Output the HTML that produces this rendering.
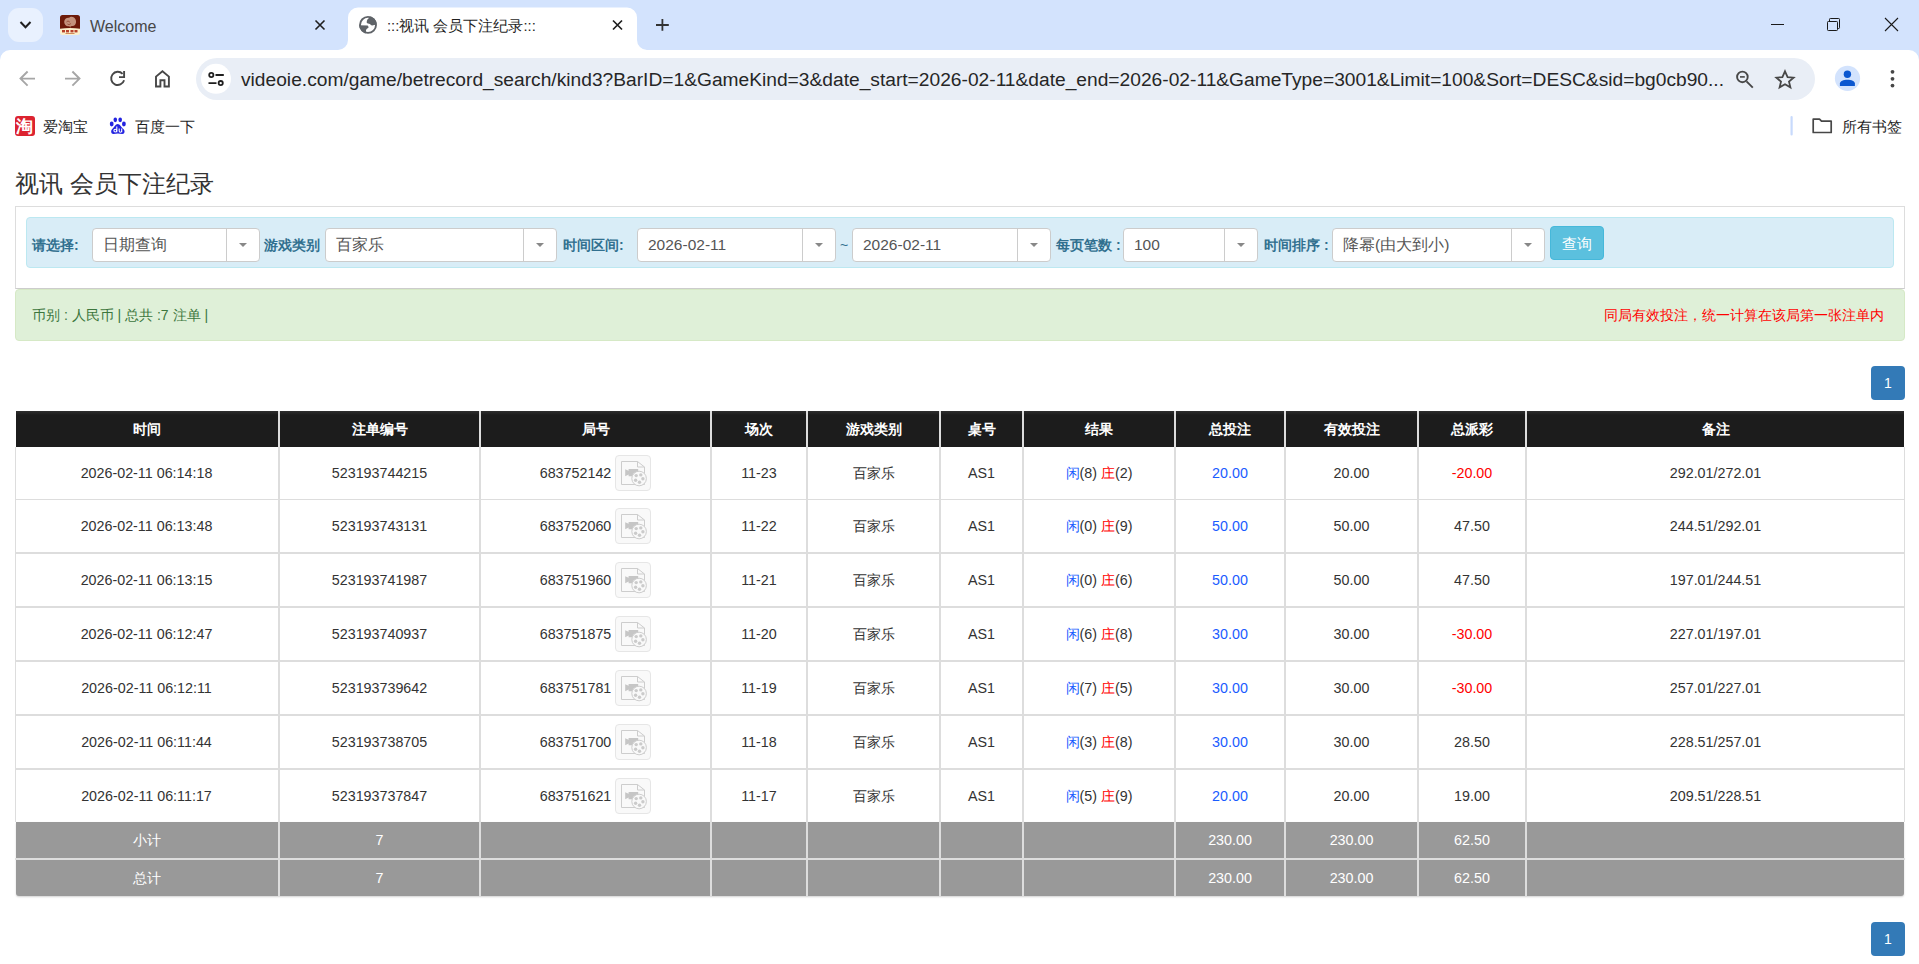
<!DOCTYPE html>
<html><head><meta charset="utf-8">
<style>
*{box-sizing:border-box}
html,body{margin:0;padding:0;width:1919px;height:964px;overflow:hidden;background:#fff;font-family:"Liberation Sans",sans-serif;color:#333}
.abs{position:absolute}
#tabstrip{position:absolute;left:0;top:0;width:1919px;height:50px;background:#d3e3fd}
#toolbar{position:absolute;left:0;top:50px;width:1919px;height:56px;background:#fff;border-radius:10px 10px 0 0}
#omni{position:absolute;left:196px;top:58px;width:1619px;height:42px;background:#e9eef6;border-radius:21px}
#bookmarks{position:absolute;left:0;top:106px;width:1919px;height:40px;background:#fff}
#page{position:absolute;left:0;top:146px;width:1919px;height:818px;background:#fff}
.title{position:absolute;left:15px;top:22.5px;font-size:24.2px;line-height:30px;color:#333;white-space:nowrap}
.panel{position:absolute;left:15px;top:60px;width:1890px;height:83px;border:1px solid #ddd;border-bottom-color:#ccc}
.ainfo{position:absolute;left:26px;top:71px;width:1868px;height:51px;background:#d9edf7;border:1px solid #bce8f1;border-radius:4px}
.lbl{position:absolute;top:90px;font-size:14px;font-weight:bold;color:#31708f;line-height:18px;white-space:nowrap}
.sel{position:absolute;top:82px;height:34px;background:#fff;border:1px solid #ccc;border-radius:4px}
.sel .t{position:absolute;left:10px;top:6.5px;font-size:15.5px;line-height:18px;color:#555;white-space:nowrap}
.sel .d{position:absolute;top:0;bottom:0;right:32px;width:1px;background:#ccc}
.sel .c{position:absolute;top:14px;right:12px;width:0;height:0;border-left:4px solid transparent;border-right:4px solid transparent;border-top:4px solid #888}
.btn{position:absolute;left:1550px;top:80px;width:54px;height:34px;background:#5bc0de;border:1px solid #46b8da;border-radius:4px;color:#fff;font-size:15.4px;line-height:34px;text-align:center}
.asucc{position:absolute;left:15px;top:143px;width:1890px;height:52px;background:#dff0d8;border:1px solid #d6e9c6;border-radius:4px;color:#3c763d;font-size:14px}
.asucc .l{position:absolute;left:16px;top:16px;line-height:18px;white-space:nowrap}
.asucc .r{position:absolute;right:20px;top:16px;line-height:18px;white-space:nowrap;color:#f00}
.pg{position:absolute;left:1871px;width:34px;height:34px;background:#337ab7;border-radius:4px;color:#fff;font-size:14px;line-height:34px;text-align:center}
.thead{position:absolute;background:linear-gradient(#2e2e2e,#1c1c1c 4px)}
.tfoot{position:absolute;background:#999;border-radius:0 0 3px 3px;box-shadow:0 1px 2px rgba(0,0,0,.18)}
.vl,.hl{position:absolute;background:#ddd}
.cell{position:absolute;display:flex;align-items:center;justify-content:center;font-size:14.3px;white-space:nowrap;color:#333}
.cell.th{color:#fff;font-weight:bold;padding-top:1px}
.cell.tf{color:#fff}
.vid{display:inline-block;vertical-align:middle;width:36px;height:36px;margin-left:4px;border:1px solid #e6e6e6;border-radius:4px;background:#f9f9f9;position:relative}
.vid svg{position:absolute;left:-1px;top:-1px}
.blue{color:#1a5cff}.red{color:#f00}
.ui{font-family:"Liberation Sans",sans-serif}

</style></head><body>
<svg class="abs" style="left:0;top:0" width="1919" height="146" viewBox="0 0 1919 146">
  <rect x="0" y="0" width="1919" height="146" fill="#fff"/>
  <rect x="0" y="0" width="1919" height="50" fill="#d3e3fd"/>
  <!-- toolbar rounded top corners -->
  <path d="M0 50H1919V60A10 10 0 0 0 1909 50H10A10 10 0 0 0 0 60Z" fill="#d3e3fd"/>
  <!-- active tab -->
  <path d="M338 50A10 10 0 0 0 348 40V17.5A10 10 0 0 1 358 7.5H627A10 10 0 0 1 637 17.5V40A10 10 0 0 0 647 50Z" fill="#fff"/>
  <!-- tab search btn -->
  <rect x="8" y="8" width="35" height="34" rx="11" fill="#e9f1fe"/>
  <path d="M20.5 22L25.5 27.2L30.5 22" fill="none" stroke="#1f1f1f" stroke-width="2"/>
  <!-- welcome favicon -->
  <path d="M60 29.5V17.5A2.5 2.5 0 0 1 62.5 15H77.5A2.5 2.5 0 0 1 80 17.5V29.5Z" fill="#6c1a09"/>
  <path d="M60 28.8Q70 27.2 80 28.8V32.5A2.5 2.5 0 0 1 77.5 35H62.5A2.5 2.5 0 0 1 60 32.5Z" fill="#fbf0cc"/>
  <path d="M64.2 21.5C64.5 19 66.5 17.5 69 17.8C70 16.5 72.5 16.2 74 17.5C75.5 18.5 76.3 20.5 76 22.5C75.8 24.5 74.5 25.8 72.5 26C71.5 26.2 70.8 26 70.5 26.5L70.3 28L69.5 26.3C68 26.5 66.2 26 65.2 24.8C64.5 23.8 64.1 22.7 64.2 21.5Z" fill="#e9c6ae" opacity="0.7"/>
  <path d="M66.5 22C67.5 20.8 69 21 69.8 22.2M67.5 24C68.5 24.8 70 24.6 70.8 23.5" fill="none" stroke="#8a3a22" stroke-width="0.8"/>
  <g fill="#b8412a"><rect x="62" y="30" width="3" height="2.4"/><rect x="66" y="30" width="3" height="2.4"/><rect x="70.5" y="30" width="3" height="2.4"/><rect x="74.5" y="30" width="3" height="2.4"/></g>
  <rect x="65.5" y="33" width="9" height="1" fill="#d08a5a"/>
  <!-- inactive tab close -->
  <path d="M315.5 20.5L324.5 29.5M324.5 20.5L315.5 29.5" stroke="#1f1f1f" stroke-width="1.6"/>
  <!-- globe -->
  <clipPath id="gclip"><circle cx="368" cy="24.9" r="8.8"/></clipPath>
  <circle cx="368" cy="24.9" r="8" fill="none" stroke="#5f6368" stroke-width="1.9"/>
  <g clip-path="url(#gclip)" fill="#5f6368">
    <path d="M369.5 15V17.8C367.3 18.8 366.3 21.3 366.9 23C368.2 23.9 370.2 23.6 371.1 25.3C372.6 25.7 374.8 25.2 378 24V15Z"/>
    <path d="M358 25.1L367.4 25.6C368.6 26.2 368.7 27.6 368.2 27.9C366.6 28.6 366 29.4 366 31L365.8 35H358Z"/>
  </g>
  <!-- active tab close -->
  <path d="M613 20.5L622 29.5M622 20.5L613 29.5" stroke="#1f1f1f" stroke-width="1.7"/>
  <!-- new tab + -->
  <path d="M662.4 19V30.8M656 25H668.8" stroke="#333" stroke-width="1.8"/>
  <!-- window controls -->
  <path d="M1771 24.5H1784" stroke="#1a1a1a" stroke-width="1"/>
  <rect x="1827.5" y="21.5" width="10" height="9" rx="0.8" fill="none" stroke="#1a1a1a" stroke-width="1"/>
  <path d="M1829.5 21V19.3A0.8 0.8 0 0 1 1830.3 18.5H1838.7A0.8 0.8 0 0 1 1839.5 19.3V27.7A0.8 0.8 0 0 1 1838.7 28.5H1838" fill="none" stroke="#1a1a1a" stroke-width="1"/>
  <path d="M1885 18L1898 31M1898 18L1885 31" stroke="#1a1a1a" stroke-width="1.1"/>
  <!-- nav icons -->
  <path d="M35 78.6H21.5M27.6 71.5L20.5 78.6L27.6 85.7" fill="none" stroke="#a6a6a6" stroke-width="1.9"/>
  <path d="M65 78.6H78.5M72.4 71.5L79.5 78.6L72.4 85.7" fill="none" stroke="#a6a6a6" stroke-width="1.9"/>
  <path d="M124.1 80.3A6.6 6.6 0 1 1 122.6 73.9" fill="none" stroke="#474747" stroke-width="1.9"/>
  <path d="M119 77.1H124.1V71" fill="none" stroke="#474747" stroke-width="1.9"/>
  <path d="M156 86.5V76.6L162.45 71.2L168.9 76.6V86.5H164.5V80.3H160.4V86.5Z" fill="none" stroke="#474747" stroke-width="1.9" stroke-linejoin="miter"/>
  <!-- omnibox -->
  <rect x="196" y="58" width="1619" height="42" rx="21" fill="#e9eef6"/>
  <circle cx="216" cy="78.8" r="15" fill="#fff"/>
  <circle cx="211.3" cy="75" r="2.1" fill="none" stroke="#1f1f1f" stroke-width="1.8"/>
  <path d="M215.5 75H223.8M208.5 83.1H216.5" stroke="#1f1f1f" stroke-width="1.8"/>
  <circle cx="220.7" cy="83.1" r="2.1" fill="none" stroke="#1f1f1f" stroke-width="1.8"/>
  <!-- zoom icon -->
  <circle cx="1742.4" cy="76.9" r="5.3" fill="none" stroke="#474747" stroke-width="1.9"/>
  <path d="M1740 76.9H1744.8" stroke="#474747" stroke-width="1.6"/>
  <path d="M1746.5 81.3L1752.8 87.6" stroke="#474747" stroke-width="1.9"/>
  <!-- star -->
  <path d="M1785 71.3L1787.6 77.1L1793.6 77.6L1789 81.6L1790.4 87.4L1785 84.3L1779.6 87.4L1781 81.6L1776.4 77.6L1782.4 77.1Z" fill="none" stroke="#474747" stroke-width="1.8" stroke-linejoin="miter"/>
  <!-- avatar -->
  <circle cx="1847.5" cy="78.4" r="12.6" fill="#d3e3fd"/>
  <circle cx="1847.4" cy="74.3" r="3.7" fill="#0b57d0"/>
  <path d="M1839.9 85.9V83.6C1839.9 81 1843.5 79.7 1847.4 79.7C1851.3 79.7 1854.9 81 1854.9 83.6V85.9Z" fill="#0b57d0"/>
  <!-- menu dots -->
  <circle cx="1892.5" cy="71.8" r="1.9" fill="#474747"/>
  <circle cx="1892.5" cy="78.8" r="1.9" fill="#474747"/>
  <circle cx="1892.5" cy="85.6" r="1.9" fill="#474747"/>
  <!-- bookmarks -->
  <rect x="15" y="116" width="20" height="20" rx="3" fill="#dc2330"/>
  <text x="24.6" y="131.6" font-size="16.5" fill="#fff" text-anchor="middle" font-weight="bold">淘</text>
  <g fill="#2323e0">
    <ellipse cx="111.7" cy="124" rx="1.9" ry="2.4"/>
    <ellipse cx="115.3" cy="119.8" rx="1.8" ry="2.4"/>
    <ellipse cx="120.2" cy="119.8" rx="1.8" ry="2.4"/>
    <ellipse cx="123.9" cy="124" rx="1.9" ry="2.4"/>
    <path d="M117.7 124.1C115.5 124.1 114.5 127 112.5 128.8C110.5 130.6 110.8 134 113.5 134C115 134 116.5 133.4 117.9 133.4C119.3 133.4 120.8 134 122.3 134C125 134 125.3 130.6 123.1 128.8C121 127 120 124.1 117.7 124.1Z"/>
  </g>
  <g fill="none" stroke="#fff" stroke-width="1.1">
    <circle cx="115.3" cy="130.6" r="1.4"/>
    <path d="M116.8 126.6V132.3M119.2 128.4V131A1.25 1.25 0 0 0 121.7 131V128.4M121.7 131V132.3"/>
  </g>
  <rect x="1790.5" y="116" width="2.2" height="19.5" rx="1.1" fill="#c8dafc"/>
  <path d="M1813.2 119.2H1819.5L1821.5 121.2H1831.2V132.5H1813.2Z" fill="none" stroke="#474747" stroke-width="1.7" stroke-linejoin="round"/>
</svg>
<div class="abs ui" style="left:90px;top:18px;font-size:16px;line-height:18px;color:#474747;white-space:nowrap">Welcome</div>
<div class="abs ui" style="left:387px;top:17px;font-size:14.8px;line-height:18px;color:#1f1f1f;white-space:nowrap">:::视讯 会员下注纪录:::</div>
<div class="abs ui" id="url" style="left:241px;top:69px;font-size:19.2px;line-height:22px;color:#262626;white-space:nowrap">videoie.com/game/betrecord_search/kind3?BarID=1&amp;GameKind=3&amp;date_start=2026-02-11&amp;date_end=2026-02-11&amp;GameType=3001&amp;Limit=100&amp;Sort=DESC&amp;sid=bg0cb90...</div>
<div class="abs ui" style="left:42.5px;top:118px;font-size:15.4px;line-height:18px;color:#1f1f1f;white-space:nowrap">爱淘宝</div>
<div class="abs ui" style="left:135px;top:118px;font-size:15.4px;line-height:18px;color:#1f1f1f;white-space:nowrap">百度一下</div>
<div class="abs ui" style="left:1842px;top:118px;font-size:15.4px;line-height:18px;color:#1f1f1f;white-space:nowrap">所有书签</div>

<div id="page">
  <div class="title">视讯 会员下注纪录</div>
  <div class="panel"></div>
  <div class="ainfo"></div>
  <div class="lbl" style="left:32px">请选择:</div>
  <div class="sel" style="left:92px;width:168px"><span class="t">日期查询</span><i class="d"></i><i class="c"></i></div>
  <div class="lbl" style="left:264px">游戏类别</div>
  <div class="sel" style="left:325px;width:232px"><span class="t">百家乐</span><i class="d"></i><i class="c"></i></div>
  <div class="lbl" style="left:563px">时间区间:</div>
  <div class="sel" style="left:637px;width:199px"><span class="t">2026-02-11</span><i class="d"></i><i class="c"></i></div>
  <div class="lbl" style="left:840px;font-weight:normal">~</div>
  <div class="sel" style="left:852px;width:199px"><span class="t">2026-02-11</span><i class="d"></i><i class="c"></i></div>
  <div class="lbl" style="left:1056px">每页笔数 :</div>
  <div class="sel" style="left:1123px;width:135px"><span class="t">100</span><i class="d"></i><i class="c"></i></div>
  <div class="lbl" style="left:1264px">时间排序 :</div>
  <div class="sel" style="left:1332px;width:213px"><span class="t">降幂(由大到小)</span><i class="d"></i><i class="c"></i></div>
  <div class="btn">查询</div>
  <div class="asucc"><span class="l">币别 : 人民币 | 总共 :7 注单 |</span><span class="r">同局有效投注，统一计算在该局第一张注单内</span></div>
  <div class="pg" style="top:220px">1</div>
<div class="thead" style="left:16px;top:265px;width:1888px;height:36px"></div>
<div class="tfoot" style="left:16px;top:676px;width:1888px;height:74px"></div>
<div class="vl" style="left:15px;top:301px;width:1px;height:375px"></div>
<div class="vl" style="left:278px;top:265px;width:2px;height:485px"></div>
<div class="vl" style="left:479px;top:265px;width:2px;height:485px"></div>
<div class="vl" style="left:710px;top:265px;width:2px;height:485px"></div>
<div class="vl" style="left:806px;top:265px;width:2px;height:485px"></div>
<div class="vl" style="left:939px;top:265px;width:2px;height:485px"></div>
<div class="vl" style="left:1022px;top:265px;width:2px;height:485px"></div>
<div class="vl" style="left:1174px;top:265px;width:2px;height:485px"></div>
<div class="vl" style="left:1284px;top:265px;width:2px;height:485px"></div>
<div class="vl" style="left:1417px;top:265px;width:2px;height:485px"></div>
<div class="vl" style="left:1525px;top:265px;width:2px;height:485px"></div>
<div class="vl" style="left:1904px;top:301px;width:1px;height:375px"></div>
<div class="hl" style="left:15px;top:353px;width:1890px;height:1px"></div>
<div class="hl" style="left:15px;top:406px;width:1890px;height:2px"></div>
<div class="hl" style="left:15px;top:460px;width:1890px;height:2px"></div>
<div class="hl" style="left:15px;top:514px;width:1890px;height:2px"></div>
<div class="hl" style="left:15px;top:568px;width:1890px;height:2px"></div>
<div class="hl" style="left:15px;top:622px;width:1890px;height:2px"></div>
<div class="hl" style="left:15px;top:712px;width:1890px;height:2px"></div>
<div class="cell th" style="left:15px;top:265px;width:263px;height:36px"><span class="in">时间</span></div>
<div class="cell th" style="left:280px;top:265px;width:199px;height:36px"><span class="in">注单编号</span></div>
<div class="cell th" style="left:481px;top:265px;width:229px;height:36px"><span class="in">局号</span></div>
<div class="cell th" style="left:712px;top:265px;width:94px;height:36px"><span class="in">场次</span></div>
<div class="cell th" style="left:808px;top:265px;width:131px;height:36px"><span class="in">游戏类别</span></div>
<div class="cell th" style="left:941px;top:265px;width:81px;height:36px"><span class="in">桌号</span></div>
<div class="cell th" style="left:1024px;top:265px;width:150px;height:36px"><span class="in">结果</span></div>
<div class="cell th" style="left:1176px;top:265px;width:108px;height:36px"><span class="in">总投注</span></div>
<div class="cell th" style="left:1286px;top:265px;width:131px;height:36px"><span class="in">有效投注</span></div>
<div class="cell th" style="left:1419px;top:265px;width:106px;height:36px"><span class="in">总派彩</span></div>
<div class="cell th" style="left:1527px;top:265px;width:377px;height:36px"><span class="in">备注</span></div>
<div class="cell " style="left:15px;top:301px;width:263px;height:52px"><span class="in">2026-02-11 06:14:18</span></div>
<div class="cell " style="left:280px;top:301px;width:199px;height:52px"><span class="in">523193744215</span></div>
<div class="cell " style="left:481px;top:301px;width:229px;height:52px"><span class="in"><span style="position:relative;top:1px">683752142</span><span class="vid"><svg width="36" height="36" viewBox="0 0 36 36"><path d="M6.5 29.5V6.5H22.5L29.5 12V29.5Z" fill="#f9f9f9" stroke="#cdcdcd"/><path d="M22.5 6.5V12H29.5" fill="none" stroke="#cdcdcd"/><path d="M10.2 14.3L13.6 15.8V14H23.2V21.2H13.6V19.6L10.2 21.2Z" fill="#c6c6c6"/><circle cx="24.1" cy="23.5" r="7.3" fill="#f9f9f9" stroke="#cdcdcd"/><g fill="#cbcbcb"><circle cx="21.2" cy="20.6" r="1.7"/><circle cx="25.8" cy="19.9" r="1.7"/><circle cx="27.9" cy="23.7" r="1.7"/><circle cx="20.6" cy="25.3" r="1.7"/><circle cx="24.5" cy="27.2" r="1.7"/></g></svg></span></span></div>
<div class="cell " style="left:712px;top:301px;width:94px;height:52px"><span class="in">11-23</span></div>
<div class="cell " style="left:808px;top:301px;width:131px;height:52px"><span class="in">百家乐</span></div>
<div class="cell " style="left:941px;top:301px;width:81px;height:52px"><span class="in">AS1</span></div>
<div class="cell " style="left:1024px;top:301px;width:150px;height:52px"><span class="in"><span class="blue">闲</span>(8) <span class="red">庄</span>(2)</span></div>
<div class="cell " style="left:1176px;top:301px;width:108px;height:52px"><span class="in"><span class="blue">20.00</span></span></div>
<div class="cell " style="left:1286px;top:301px;width:131px;height:52px"><span class="in">20.00</span></div>
<div class="cell " style="left:1419px;top:301px;width:106px;height:52px"><span class="in"><span class="red">-20.00</span></span></div>
<div class="cell " style="left:1527px;top:301px;width:377px;height:52px"><span class="in">292.01/272.01</span></div>
<div class="cell " style="left:15px;top:354px;width:263px;height:52px"><span class="in">2026-02-11 06:13:48</span></div>
<div class="cell " style="left:280px;top:354px;width:199px;height:52px"><span class="in">523193743131</span></div>
<div class="cell " style="left:481px;top:354px;width:229px;height:52px"><span class="in"><span style="position:relative;top:1px">683752060</span><span class="vid"><svg width="36" height="36" viewBox="0 0 36 36"><path d="M6.5 29.5V6.5H22.5L29.5 12V29.5Z" fill="#f9f9f9" stroke="#cdcdcd"/><path d="M22.5 6.5V12H29.5" fill="none" stroke="#cdcdcd"/><path d="M10.2 14.3L13.6 15.8V14H23.2V21.2H13.6V19.6L10.2 21.2Z" fill="#c6c6c6"/><circle cx="24.1" cy="23.5" r="7.3" fill="#f9f9f9" stroke="#cdcdcd"/><g fill="#cbcbcb"><circle cx="21.2" cy="20.6" r="1.7"/><circle cx="25.8" cy="19.9" r="1.7"/><circle cx="27.9" cy="23.7" r="1.7"/><circle cx="20.6" cy="25.3" r="1.7"/><circle cx="24.5" cy="27.2" r="1.7"/></g></svg></span></span></div>
<div class="cell " style="left:712px;top:354px;width:94px;height:52px"><span class="in">11-22</span></div>
<div class="cell " style="left:808px;top:354px;width:131px;height:52px"><span class="in">百家乐</span></div>
<div class="cell " style="left:941px;top:354px;width:81px;height:52px"><span class="in">AS1</span></div>
<div class="cell " style="left:1024px;top:354px;width:150px;height:52px"><span class="in"><span class="blue">闲</span>(0) <span class="red">庄</span>(9)</span></div>
<div class="cell " style="left:1176px;top:354px;width:108px;height:52px"><span class="in"><span class="blue">50.00</span></span></div>
<div class="cell " style="left:1286px;top:354px;width:131px;height:52px"><span class="in">50.00</span></div>
<div class="cell " style="left:1419px;top:354px;width:106px;height:52px"><span class="in">47.50</span></div>
<div class="cell " style="left:1527px;top:354px;width:377px;height:52px"><span class="in">244.51/292.01</span></div>
<div class="cell " style="left:15px;top:408px;width:263px;height:52px"><span class="in">2026-02-11 06:13:15</span></div>
<div class="cell " style="left:280px;top:408px;width:199px;height:52px"><span class="in">523193741987</span></div>
<div class="cell " style="left:481px;top:408px;width:229px;height:52px"><span class="in"><span style="position:relative;top:1px">683751960</span><span class="vid"><svg width="36" height="36" viewBox="0 0 36 36"><path d="M6.5 29.5V6.5H22.5L29.5 12V29.5Z" fill="#f9f9f9" stroke="#cdcdcd"/><path d="M22.5 6.5V12H29.5" fill="none" stroke="#cdcdcd"/><path d="M10.2 14.3L13.6 15.8V14H23.2V21.2H13.6V19.6L10.2 21.2Z" fill="#c6c6c6"/><circle cx="24.1" cy="23.5" r="7.3" fill="#f9f9f9" stroke="#cdcdcd"/><g fill="#cbcbcb"><circle cx="21.2" cy="20.6" r="1.7"/><circle cx="25.8" cy="19.9" r="1.7"/><circle cx="27.9" cy="23.7" r="1.7"/><circle cx="20.6" cy="25.3" r="1.7"/><circle cx="24.5" cy="27.2" r="1.7"/></g></svg></span></span></div>
<div class="cell " style="left:712px;top:408px;width:94px;height:52px"><span class="in">11-21</span></div>
<div class="cell " style="left:808px;top:408px;width:131px;height:52px"><span class="in">百家乐</span></div>
<div class="cell " style="left:941px;top:408px;width:81px;height:52px"><span class="in">AS1</span></div>
<div class="cell " style="left:1024px;top:408px;width:150px;height:52px"><span class="in"><span class="blue">闲</span>(0) <span class="red">庄</span>(6)</span></div>
<div class="cell " style="left:1176px;top:408px;width:108px;height:52px"><span class="in"><span class="blue">50.00</span></span></div>
<div class="cell " style="left:1286px;top:408px;width:131px;height:52px"><span class="in">50.00</span></div>
<div class="cell " style="left:1419px;top:408px;width:106px;height:52px"><span class="in">47.50</span></div>
<div class="cell " style="left:1527px;top:408px;width:377px;height:52px"><span class="in">197.01/244.51</span></div>
<div class="cell " style="left:15px;top:462px;width:263px;height:52px"><span class="in">2026-02-11 06:12:47</span></div>
<div class="cell " style="left:280px;top:462px;width:199px;height:52px"><span class="in">523193740937</span></div>
<div class="cell " style="left:481px;top:462px;width:229px;height:52px"><span class="in"><span style="position:relative;top:1px">683751875</span><span class="vid"><svg width="36" height="36" viewBox="0 0 36 36"><path d="M6.5 29.5V6.5H22.5L29.5 12V29.5Z" fill="#f9f9f9" stroke="#cdcdcd"/><path d="M22.5 6.5V12H29.5" fill="none" stroke="#cdcdcd"/><path d="M10.2 14.3L13.6 15.8V14H23.2V21.2H13.6V19.6L10.2 21.2Z" fill="#c6c6c6"/><circle cx="24.1" cy="23.5" r="7.3" fill="#f9f9f9" stroke="#cdcdcd"/><g fill="#cbcbcb"><circle cx="21.2" cy="20.6" r="1.7"/><circle cx="25.8" cy="19.9" r="1.7"/><circle cx="27.9" cy="23.7" r="1.7"/><circle cx="20.6" cy="25.3" r="1.7"/><circle cx="24.5" cy="27.2" r="1.7"/></g></svg></span></span></div>
<div class="cell " style="left:712px;top:462px;width:94px;height:52px"><span class="in">11-20</span></div>
<div class="cell " style="left:808px;top:462px;width:131px;height:52px"><span class="in">百家乐</span></div>
<div class="cell " style="left:941px;top:462px;width:81px;height:52px"><span class="in">AS1</span></div>
<div class="cell " style="left:1024px;top:462px;width:150px;height:52px"><span class="in"><span class="blue">闲</span>(6) <span class="red">庄</span>(8)</span></div>
<div class="cell " style="left:1176px;top:462px;width:108px;height:52px"><span class="in"><span class="blue">30.00</span></span></div>
<div class="cell " style="left:1286px;top:462px;width:131px;height:52px"><span class="in">30.00</span></div>
<div class="cell " style="left:1419px;top:462px;width:106px;height:52px"><span class="in"><span class="red">-30.00</span></span></div>
<div class="cell " style="left:1527px;top:462px;width:377px;height:52px"><span class="in">227.01/197.01</span></div>
<div class="cell " style="left:15px;top:516px;width:263px;height:52px"><span class="in">2026-02-11 06:12:11</span></div>
<div class="cell " style="left:280px;top:516px;width:199px;height:52px"><span class="in">523193739642</span></div>
<div class="cell " style="left:481px;top:516px;width:229px;height:52px"><span class="in"><span style="position:relative;top:1px">683751781</span><span class="vid"><svg width="36" height="36" viewBox="0 0 36 36"><path d="M6.5 29.5V6.5H22.5L29.5 12V29.5Z" fill="#f9f9f9" stroke="#cdcdcd"/><path d="M22.5 6.5V12H29.5" fill="none" stroke="#cdcdcd"/><path d="M10.2 14.3L13.6 15.8V14H23.2V21.2H13.6V19.6L10.2 21.2Z" fill="#c6c6c6"/><circle cx="24.1" cy="23.5" r="7.3" fill="#f9f9f9" stroke="#cdcdcd"/><g fill="#cbcbcb"><circle cx="21.2" cy="20.6" r="1.7"/><circle cx="25.8" cy="19.9" r="1.7"/><circle cx="27.9" cy="23.7" r="1.7"/><circle cx="20.6" cy="25.3" r="1.7"/><circle cx="24.5" cy="27.2" r="1.7"/></g></svg></span></span></div>
<div class="cell " style="left:712px;top:516px;width:94px;height:52px"><span class="in">11-19</span></div>
<div class="cell " style="left:808px;top:516px;width:131px;height:52px"><span class="in">百家乐</span></div>
<div class="cell " style="left:941px;top:516px;width:81px;height:52px"><span class="in">AS1</span></div>
<div class="cell " style="left:1024px;top:516px;width:150px;height:52px"><span class="in"><span class="blue">闲</span>(7) <span class="red">庄</span>(5)</span></div>
<div class="cell " style="left:1176px;top:516px;width:108px;height:52px"><span class="in"><span class="blue">30.00</span></span></div>
<div class="cell " style="left:1286px;top:516px;width:131px;height:52px"><span class="in">30.00</span></div>
<div class="cell " style="left:1419px;top:516px;width:106px;height:52px"><span class="in"><span class="red">-30.00</span></span></div>
<div class="cell " style="left:1527px;top:516px;width:377px;height:52px"><span class="in">257.01/227.01</span></div>
<div class="cell " style="left:15px;top:570px;width:263px;height:52px"><span class="in">2026-02-11 06:11:44</span></div>
<div class="cell " style="left:280px;top:570px;width:199px;height:52px"><span class="in">523193738705</span></div>
<div class="cell " style="left:481px;top:570px;width:229px;height:52px"><span class="in"><span style="position:relative;top:1px">683751700</span><span class="vid"><svg width="36" height="36" viewBox="0 0 36 36"><path d="M6.5 29.5V6.5H22.5L29.5 12V29.5Z" fill="#f9f9f9" stroke="#cdcdcd"/><path d="M22.5 6.5V12H29.5" fill="none" stroke="#cdcdcd"/><path d="M10.2 14.3L13.6 15.8V14H23.2V21.2H13.6V19.6L10.2 21.2Z" fill="#c6c6c6"/><circle cx="24.1" cy="23.5" r="7.3" fill="#f9f9f9" stroke="#cdcdcd"/><g fill="#cbcbcb"><circle cx="21.2" cy="20.6" r="1.7"/><circle cx="25.8" cy="19.9" r="1.7"/><circle cx="27.9" cy="23.7" r="1.7"/><circle cx="20.6" cy="25.3" r="1.7"/><circle cx="24.5" cy="27.2" r="1.7"/></g></svg></span></span></div>
<div class="cell " style="left:712px;top:570px;width:94px;height:52px"><span class="in">11-18</span></div>
<div class="cell " style="left:808px;top:570px;width:131px;height:52px"><span class="in">百家乐</span></div>
<div class="cell " style="left:941px;top:570px;width:81px;height:52px"><span class="in">AS1</span></div>
<div class="cell " style="left:1024px;top:570px;width:150px;height:52px"><span class="in"><span class="blue">闲</span>(3) <span class="red">庄</span>(8)</span></div>
<div class="cell " style="left:1176px;top:570px;width:108px;height:52px"><span class="in"><span class="blue">30.00</span></span></div>
<div class="cell " style="left:1286px;top:570px;width:131px;height:52px"><span class="in">30.00</span></div>
<div class="cell " style="left:1419px;top:570px;width:106px;height:52px"><span class="in">28.50</span></div>
<div class="cell " style="left:1527px;top:570px;width:377px;height:52px"><span class="in">228.51/257.01</span></div>
<div class="cell " style="left:15px;top:624px;width:263px;height:52px"><span class="in">2026-02-11 06:11:17</span></div>
<div class="cell " style="left:280px;top:624px;width:199px;height:52px"><span class="in">523193737847</span></div>
<div class="cell " style="left:481px;top:624px;width:229px;height:52px"><span class="in"><span style="position:relative;top:1px">683751621</span><span class="vid"><svg width="36" height="36" viewBox="0 0 36 36"><path d="M6.5 29.5V6.5H22.5L29.5 12V29.5Z" fill="#f9f9f9" stroke="#cdcdcd"/><path d="M22.5 6.5V12H29.5" fill="none" stroke="#cdcdcd"/><path d="M10.2 14.3L13.6 15.8V14H23.2V21.2H13.6V19.6L10.2 21.2Z" fill="#c6c6c6"/><circle cx="24.1" cy="23.5" r="7.3" fill="#f9f9f9" stroke="#cdcdcd"/><g fill="#cbcbcb"><circle cx="21.2" cy="20.6" r="1.7"/><circle cx="25.8" cy="19.9" r="1.7"/><circle cx="27.9" cy="23.7" r="1.7"/><circle cx="20.6" cy="25.3" r="1.7"/><circle cx="24.5" cy="27.2" r="1.7"/></g></svg></span></span></div>
<div class="cell " style="left:712px;top:624px;width:94px;height:52px"><span class="in">11-17</span></div>
<div class="cell " style="left:808px;top:624px;width:131px;height:52px"><span class="in">百家乐</span></div>
<div class="cell " style="left:941px;top:624px;width:81px;height:52px"><span class="in">AS1</span></div>
<div class="cell " style="left:1024px;top:624px;width:150px;height:52px"><span class="in"><span class="blue">闲</span>(5) <span class="red">庄</span>(9)</span></div>
<div class="cell " style="left:1176px;top:624px;width:108px;height:52px"><span class="in"><span class="blue">20.00</span></span></div>
<div class="cell " style="left:1286px;top:624px;width:131px;height:52px"><span class="in">20.00</span></div>
<div class="cell " style="left:1419px;top:624px;width:106px;height:52px"><span class="in">19.00</span></div>
<div class="cell " style="left:1527px;top:624px;width:377px;height:52px"><span class="in">209.51/228.51</span></div>
<div class="cell tf" style="left:15px;top:676px;width:263px;height:36px"><span class="in">小计</span></div>
<div class="cell tf" style="left:280px;top:676px;width:199px;height:36px"><span class="in">7</span></div>
<div class="cell tf" style="left:1176px;top:676px;width:108px;height:36px"><span class="in">230.00</span></div>
<div class="cell tf" style="left:1286px;top:676px;width:131px;height:36px"><span class="in">230.00</span></div>
<div class="cell tf" style="left:1419px;top:676px;width:106px;height:36px"><span class="in">62.50</span></div>
<div class="cell tf" style="left:15px;top:714px;width:263px;height:36px"><span class="in">总计</span></div>
<div class="cell tf" style="left:280px;top:714px;width:199px;height:36px"><span class="in">7</span></div>
<div class="cell tf" style="left:1176px;top:714px;width:108px;height:36px"><span class="in">230.00</span></div>
<div class="cell tf" style="left:1286px;top:714px;width:131px;height:36px"><span class="in">230.00</span></div>
<div class="cell tf" style="left:1419px;top:714px;width:106px;height:36px"><span class="in">62.50</span></div>
  <div class="pg" style="top:776px">1</div>
</div>

</body></html>
